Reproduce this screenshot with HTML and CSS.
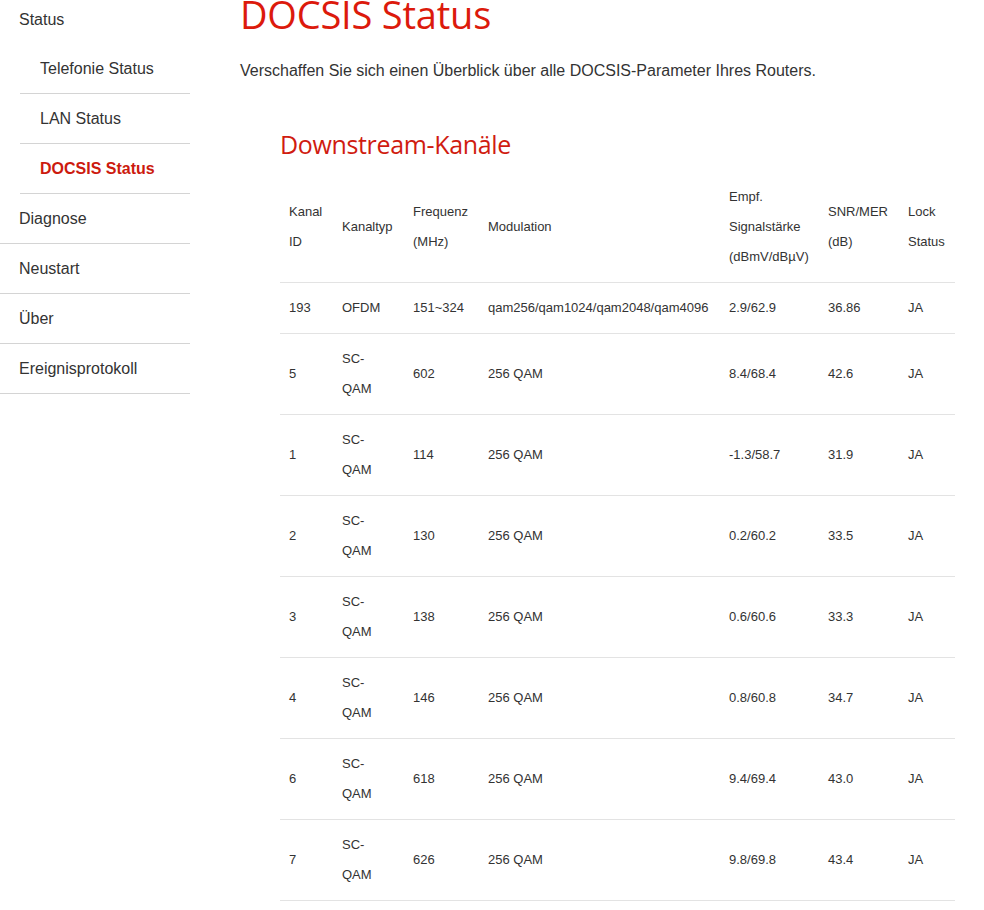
FILE: index.html
```html
<!DOCTYPE html>
<html lang="de">
<head>
<meta charset="utf-8">
<title>DOCSIS Status</title>
<link rel="stylesheet" href="styles.css">
</head>
<body>
<div class="page">
  <nav class="sidebar">
    <ul class="menu">
      <li class="group">
        <a class="item">Status</a>
        <ul class="submenu">
          <li><a class="item sub">Telefonie Status</a></li>
          <li><a class="item sub">LAN Status</a></li>
          <li><a class="item sub active">DOCSIS Status</a></li>
        </ul>
      </li>
      <li><a class="item top">Diagnose</a></li>
      <li><a class="item top">Neustart</a></li>
      <li><a class="item top">Über</a></li>
      <li><a class="item top">Ereignisprotokoll</a></li>
    </ul>
  </nav>
  <main class="content">
    <h1 class="title">DOCSIS Status</h1>
    <p class="intro">Verschaffen Sie sich einen Überblick über alle DOCSIS-Parameter Ihres Routers.</p>
    <section class="section">
      <h2 class="subtitle">Downstream-Kanäle</h2>
      <table class="channels">
        <colgroup>
          <col class="c1"><col class="c2"><col class="c3"><col class="c4"><col class="c5"><col class="c6"><col class="c7">
        </colgroup>
        <thead>
          <tr>
            <th>Kanal ID</th>
            <th class="type">Kanaltyp</th>
            <th>Frequenz (MHz)</th>
            <th>Modulation</th>
            <th>Empf. Signalstärke (dBmV/dBµV)</th>
            <th>SNR/MER (dB)</th>
            <th>Lock Status</th>
          </tr>
        </thead>
        <tbody>
          <tr><td>193</td><td class="type">OFDM</td><td>151~324</td><td>qam256/qam1024/qam2048/qam4096</td><td>2.9/62.9</td><td>36.86</td><td>JA</td></tr>
          <tr><td>5</td><td class="type">SC-QAM</td><td>602</td><td>256 QAM</td><td>8.4/68.4</td><td>42.6</td><td>JA</td></tr>
          <tr><td>1</td><td class="type">SC-QAM</td><td>114</td><td>256 QAM</td><td>-1.3/58.7</td><td>31.9</td><td>JA</td></tr>
          <tr><td>2</td><td class="type">SC-QAM</td><td>130</td><td>256 QAM</td><td>0.2/60.2</td><td>33.5</td><td>JA</td></tr>
          <tr><td>3</td><td class="type">SC-QAM</td><td>138</td><td>256 QAM</td><td>0.6/60.6</td><td>33.3</td><td>JA</td></tr>
          <tr><td>4</td><td class="type">SC-QAM</td><td>146</td><td>256 QAM</td><td>0.8/60.8</td><td>34.7</td><td>JA</td></tr>
          <tr><td>6</td><td class="type">SC-QAM</td><td>618</td><td>256 QAM</td><td>9.4/69.4</td><td>43.0</td><td>JA</td></tr>
          <tr><td>7</td><td class="type">SC-QAM</td><td>626</td><td>256 QAM</td><td>9.8/69.8</td><td>43.4</td><td>JA</td></tr>
        </tbody>
      </table>
    </section>
  </main>
</div>
</body>
</html>
```

FILE: styles.css
```css
html, body {
  margin: 0;
  padding: 0;
  background: #ffffff;
}
body {
  font-family: "Liberation Sans", Arial, Helvetica, sans-serif;
  color: #333333;
  overflow: hidden;
}
.page {
  display: flex;
  align-items: flex-start;
  margin-top: -5px;
}
.sidebar {
  width: 190px;
  flex: 0 0 190px;
}
.menu, .submenu {
  list-style: none;
  margin: 0;
  padding: 0;
}
.item {
  display: flex;
  align-items: center;
  height: 49px;
  padding-left: 19px;
  font-size: 16px;
  color: #333333;
  text-decoration: none;
}
.item.top {
  border-bottom: 1px solid #d4d4d4;
}
.submenu {
  margin-left: 20px;
}
.item.sub {
  padding-left: 20px;
  border-bottom: 1px solid #d4d4d4;
}
.item.active {
  color: #cc1a0e;
  font-weight: bold;
}
.content {
  flex: 1;
  padding-left: 50px;
}
.title {
  margin: -3px 0 0 0;
  font-family: "Open Sans", sans-serif;
  font-weight: 400;
  font-size: 38px;
  line-height: 44px;
  color: #dc1a0c;
  letter-spacing: -0.2px;
}
.intro {
  margin: 25px 0 0 0;
  font-size: 16px;
  line-height: 20px;
}
.section {
  padding-left: 40px;
  margin-top: 46px;
}
.subtitle {
  margin: 0;
  font-family: "Open Sans", sans-serif;
  font-weight: 400;
  font-size: 25px;
  line-height: 34px;
  color: #d01c10;
  letter-spacing: -0.35px;
}
.channels {
  margin-top: 11px;
  width: 675px;
  table-layout: fixed;
  border-collapse: collapse;
  font-size: 13px;
  line-height: 30px;
}
.c1 { width: 53px; }
.c2 { width: 71px; }
.c3 { width: 75px; }
.c4 { width: 241px; }
.c5 { width: 99px; }
.c6 { width: 80px; }
.c7 { width: 56px; }
.channels th,
.channels td {
  text-align: left;
  font-weight: normal;
  vertical-align: middle;
  padding: 10px 9px;
  border-bottom: 1px solid #e3e3e3;
  color: #333333;
}
.channels th.type,
.channels td.type {
  padding-right: 20px;
}
```
